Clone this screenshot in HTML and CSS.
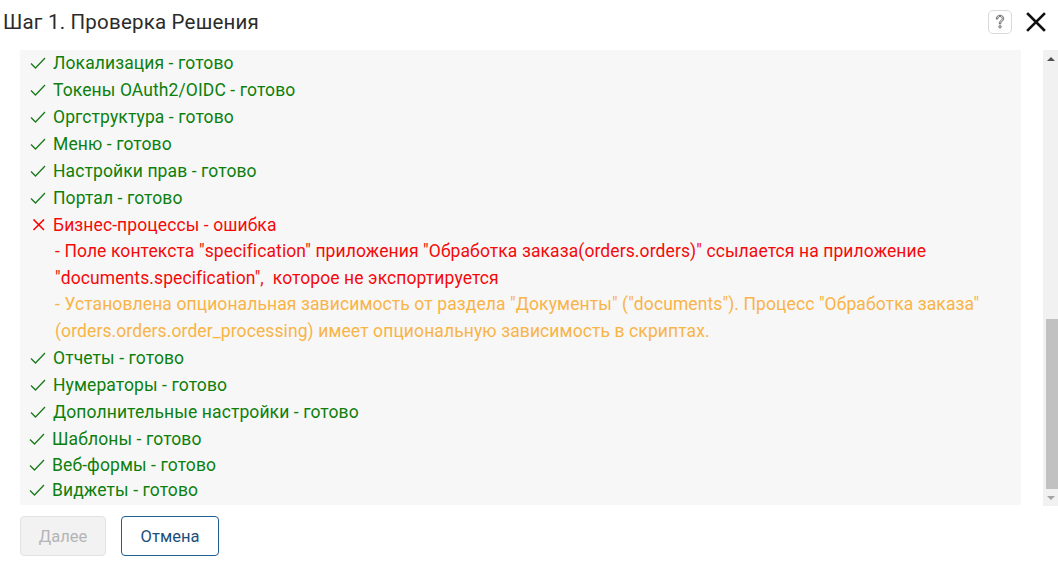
FILE: index.html
```html
<!DOCTYPE html>
<html lang="ru">
<head>
<meta charset="utf-8">
<link rel="stylesheet" href="styles.css">
</head>
<body>
<div class="dialog">
  <div class="header">
    <div class="title">Шаг 1. Проверка Решения</div>
    <div class="tools">
      <div class="help"><svg width="12" height="16" viewBox="0 0 12 16"><path d="M2.3 5 C2.3 2.6 4 1.2 6 1.2 C8.1 1.2 9.7 2.6 9.7 4.6 C9.7 6.5 8.1 7.2 7.3 7.9 C6.8 8.4 6.7 8.9 6.7 9.9 L5.3 9.9 C5.3 8.7 5.4 7.9 6.1 7.2 C6.9 6.4 8.3 5.8 8.3 4.6 C8.3 3.4 7.3 2.5 6 2.5 C4.7 2.5 3.7 3.4 3.7 5 Z" fill="none" stroke="#555" stroke-width="0.9" stroke-linejoin="round"/><circle cx="6" cy="12.8" r="1.2" fill="none" stroke="#555" stroke-width="0.9"/></svg></div>
      <div class="close"><svg width="20" height="20" viewBox="0 0 20 20"><path d="M2 2 L18 18 M18 2 L2 18" stroke="#111" stroke-width="2.6" stroke-linecap="square"/></svg></div>
    </div>
  </div>
  <div class="main">
    <div class="log">
      <div class="row ok"><svg class="ico" width="16" height="12" viewBox="0 0 16 12"><path d="M1 6.5 L5.5 11 L15 1" fill="none" stroke="#1a7a1a" stroke-width="1.3"/></svg><span>Локализация - готово</span></div>
      <div class="row ok"><svg class="ico" width="16" height="12" viewBox="0 0 16 12"><path d="M1 6.5 L5.5 11 L15 1" fill="none" stroke="#1a7a1a" stroke-width="1.3"/></svg><span>Токены OAuth2/OIDC - готово</span></div>
      <div class="row ok"><svg class="ico" width="16" height="12" viewBox="0 0 16 12"><path d="M1 6.5 L5.5 11 L15 1" fill="none" stroke="#1a7a1a" stroke-width="1.3"/></svg><span>Оргструктура - готово</span></div>
      <div class="row ok"><svg class="ico" width="16" height="12" viewBox="0 0 16 12"><path d="M1 6.5 L5.5 11 L15 1" fill="none" stroke="#1a7a1a" stroke-width="1.3"/></svg><span>Меню - готово</span></div>
      <div class="row ok"><svg class="ico" width="16" height="12" viewBox="0 0 16 12"><path d="M1 6.5 L5.5 11 L15 1" fill="none" stroke="#1a7a1a" stroke-width="1.3"/></svg><span>Настройки прав - готово</span></div>
      <div class="row ok"><svg class="ico" width="16" height="12" viewBox="0 0 16 12"><path d="M1 6.5 L5.5 11 L15 1" fill="none" stroke="#1a7a1a" stroke-width="1.3"/></svg><span>Портал - готово</span></div>
      <div class="row err"><svg class="ico" width="16" height="12" viewBox="0 0 16 12"><path d="M3.5 0.5 L14 11 M14 0.5 L3.5 11" fill="none" stroke="#f00" stroke-width="1.6"/></svg><span>Бизнес-процессы - ошибка</span></div>
      <div class="detail err">- Поле контекста "specification" приложения "Обработка заказа(orders.orders)" ссылается на приложение<br>"documents.specification",&nbsp; которое не экспортируется</div>
      <div class="detail warn">- Установлена опциональная зависимость от раздела "Документы" ("documents"). Процесс "Обработка заказа"<br>(orders.orders.order_processing) имеет опциональную зависимость в скриптах.</div>
      <div class="row ok"><svg class="ico" width="16" height="12" viewBox="0 0 16 12"><path d="M1 6.5 L5.5 11 L15 1" fill="none" stroke="#1a7a1a" stroke-width="1.3"/></svg><span>Отчеты - готово</span></div>
      <div class="row ok"><svg class="ico" width="16" height="12" viewBox="0 0 16 12"><path d="M1 6.5 L5.5 11 L15 1" fill="none" stroke="#1a7a1a" stroke-width="1.3"/></svg><span>Нумераторы - готово</span></div>
      <div class="row ok"><svg class="ico" width="16" height="12" viewBox="0 0 16 12"><path d="M1 6.5 L5.5 11 L15 1" fill="none" stroke="#1a7a1a" stroke-width="1.3"/></svg><span>Дополнительные настройки - готово</span></div>
      <div class="row ok shift"><svg class="ico" width="16" height="12" viewBox="0 0 16 12"><path d="M1 6.5 L5.5 11 L15 1" fill="none" stroke="#1a7a1a" stroke-width="1.3"/></svg><span>Шаблоны - готово</span></div>
      <div class="row ok shift tight"><svg class="ico" width="16" height="12" viewBox="0 0 16 12"><path d="M1 6.5 L5.5 11 L15 1" fill="none" stroke="#1a7a1a" stroke-width="1.3"/></svg><span>Веб-формы - готово</span></div>
      <div class="row ok shift"><svg class="ico" width="16" height="12" viewBox="0 0 16 12"><path d="M1 6.5 L5.5 11 L15 1" fill="none" stroke="#1a7a1a" stroke-width="1.3"/></svg><span>Виджеты - готово</span></div>
    </div>
    <div class="scrollbar">
      <div class="arrow up"></div>
      <div class="track"><div class="thumb"></div></div>
      <div class="arrow down"></div>
    </div>
  </div>
  <div class="footer">
    <button class="btn disabled">Далее</button>
    <button class="btn outline">Отмена</button>
  </div>
</div>
</body>
</html>
```

FILE: styles.css
```css
* { box-sizing: border-box; }
html, body { margin: 0; padding: 0; background: #fff; }
body {
  font-family: Roboto, "Noto Sans", sans-serif;
  font-size: 17.5px;
  letter-spacing: 0.1px;
  color: #333;
  width: 1058px;
  height: 562px;
  overflow: hidden;
}
.header {
  height: 42px;
  display: flex;
  align-items: center;
  justify-content: space-between;
  padding: 0 12px 0 3px;
  margin-bottom: 8px;
}
.title {
  font-size: 20.5px;
  letter-spacing: 0.2px;
  color: #2b2b2b;
  margin-top: 1px;
}
.tools {
  display: flex;
  align-items: center;
  gap: 14px;
  margin-top: 2px;
}
.help {
  width: 24px;
  height: 24px;
  border: 1px solid #d9d9d9;
  border-radius: 5px;
  display: flex;
  align-items: center;
  justify-content: center;
}
.close {
  width: 20px;
  height: 20px;
  display: flex;
}
.main {
  display: flex;
  gap: 22px;
  padding-left: 20px;
  height: 456px;
}
.log {
  width: 1001px;
  background: #f7f7f7;
  height: 455px;
}
.row {
  display: flex;
  align-items: center;
  height: 27px;
  padding-left: 10px;
}
.row:first-child { height: 26px; }
.row.shift { padding-left: 9px; }
.row.tight { height: 24px; }
.ico { flex: none; margin-right: 7px; }
.ok { color: #0d7f0d; }
.err { color: #f50a0a; }
.warn { color: #f9b447; }
.detail {
  line-height: 26.7px;
  padding-left: 35px;
}
.scrollbar {
  width: 15px;
  height: 456px;
  background: #f1f1f1;
  display: flex;
  flex-direction: column;
}
.arrow {
  height: 17px;
  display: flex;
  align-items: center;
  justify-content: center;
}
.arrow.up::before {
  content: "";
  border-left: 4px solid transparent;
  border-right: 4px solid transparent;
  border-bottom: 4px solid #505050;
}
.arrow.down::before {
  content: "";
  border-left: 4px solid transparent;
  border-right: 4px solid transparent;
  border-top: 4px solid #a3a3a3;
}
.track {
  flex: 1;
  display: flex;
  flex-direction: column;
  justify-content: flex-end;
  padding: 0 0 0 3px;
}
.thumb {
  height: 170px;
  background: #c1c1c1;
}
.footer {
  display: flex;
  gap: 15px;
  padding-left: 20px;
  margin-top: 10px;
}
.btn {
  height: 40px;
  font-family: Roboto, "Noto Sans", sans-serif;
  font-size: 16.5px;
  border-radius: 4px;
  padding: 0;
  background: #fff;
}
.btn.disabled {
  width: 86px;
  background: #f2f2f2;
  border: 1px solid #e3e3e3;
  color: #b5b5b5;
}
.btn.outline {
  width: 98px;
  border: 1px solid #1f5d92;
  color: #1b4f7c;
}
```
